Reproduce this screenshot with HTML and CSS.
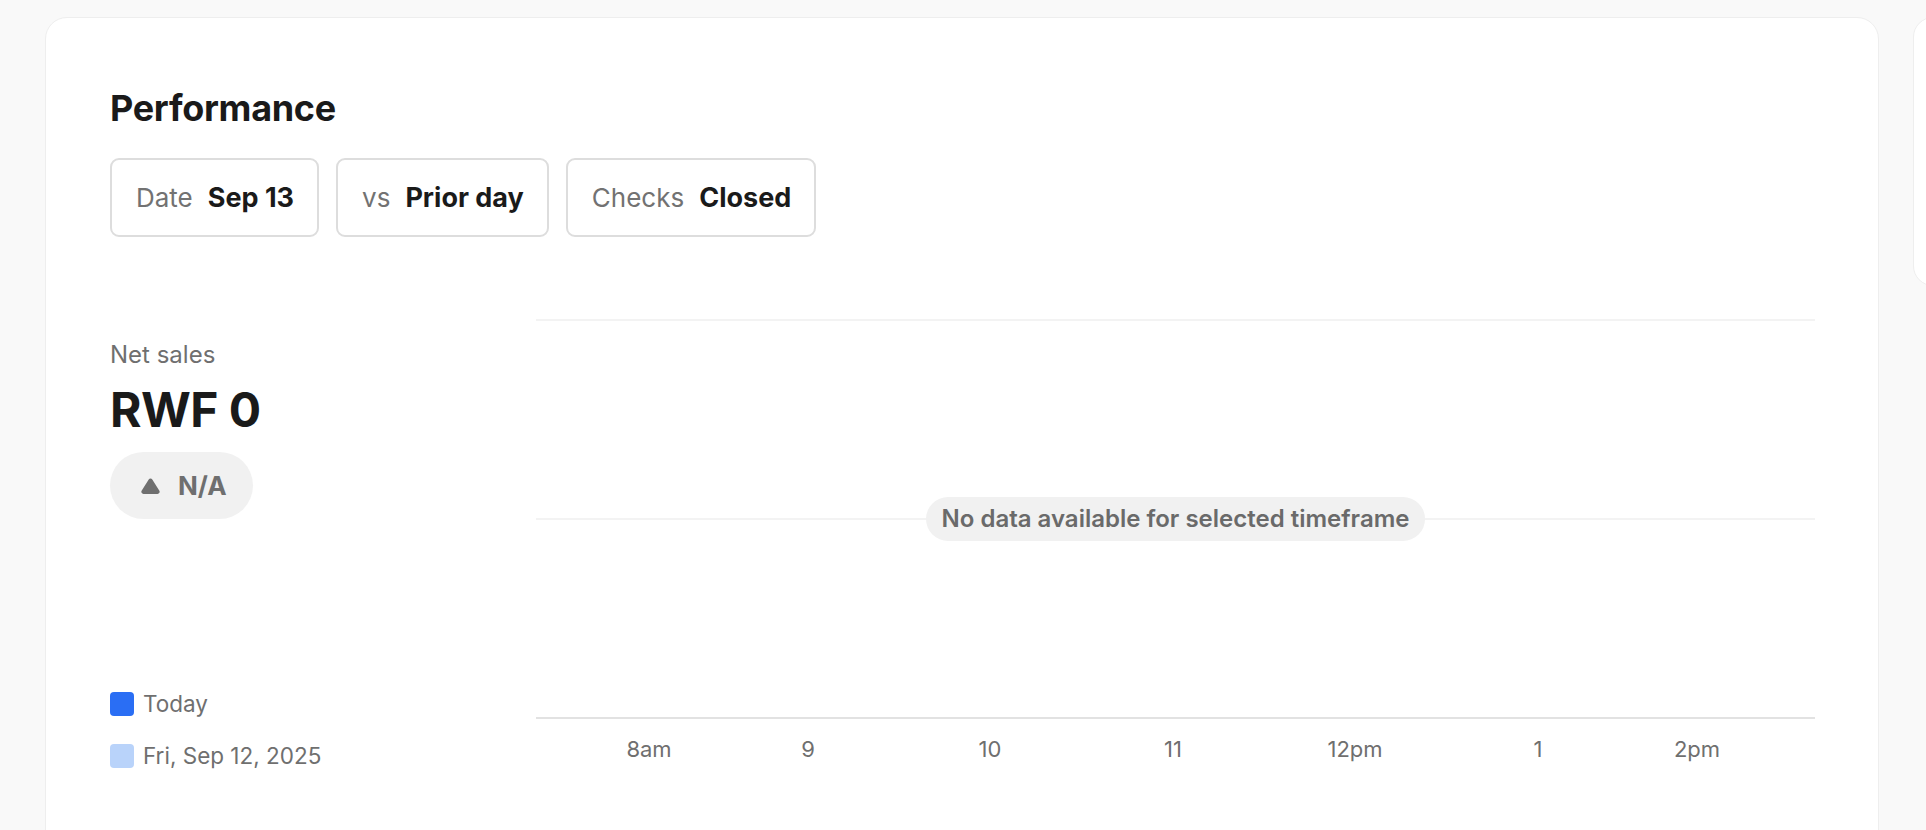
FILE: index.html
```html
<!DOCTYPE html>
<html lang="en">
<head>
<meta charset="utf-8">
<title>Performance</title>
<link rel="stylesheet" href="styles.css">
</head>
<body>
<div class="page">
  <section class="card">
    <h2 class="title">Performance</h2>
    <div class="filters">
      <button class="filter"><span class="f-label">Date</span><span class="f-value">Sep 13</span></button>
      <button class="filter"><span class="f-label">vs</span><span class="f-value">Prior day</span></button>
      <button class="filter"><span class="f-label">Checks</span><span class="f-value">Closed</span></button>
    </div>
    <div class="body">
      <div class="summary">
        <div class="metric">
          <div class="metric-label">Net sales</div>
          <div class="metric-value">RWF 0</div>
          <div class="delta">
            <svg class="delta-icon" width="21" height="17" viewBox="0 0 20 16"><path d="M8.3 2.2a2 2 0 0 1 3.4 0l6.6 10.6A2 2 0 0 1 16.6 16H3.4a2 2 0 0 1-1.7-3.2z" fill="#6f6f6f"/></svg>
            <span>N/A</span>
          </div>
        </div>
        <ul class="legend">
          <li class="legend-item"><span class="swatch swatch-today"></span>Today</li>
          <li class="legend-item"><span class="swatch swatch-prior"></span>Fri, Sep 12, 2025</li>
        </ul>
      </div>
      <div class="chart">
        <div class="plot">
          <div class="grid-line"></div>
          <div class="grid-line"></div>
          <div class="axis-line"></div>
          <div class="empty">No data available for selected timeframe</div>
        </div>
        <div class="ticks">
          <span class="tick" style="left:113px">8am</span>
          <span class="tick" style="left:272px">9</span>
          <span class="tick" style="left:454px">10</span>
          <span class="tick" style="left:637px">11</span>
          <span class="tick" style="left:819px">12pm</span>
          <span class="tick" style="left:1002px">1</span>
          <span class="tick" style="left:1161px">2pm</span>
        </div>
      </div>
    </div>
  </section>
  <aside class="side-card"></aside>
</div>
</body>
</html>
```

FILE: styles.css
```css
* { box-sizing: border-box; }
html, body {
  margin: 0;
  padding: 0;
  background: #f9f9f9;
  font-family: Inter, "Noto Sans", "Liberation Sans", sans-serif;
  color: #1a1a1a;
  overflow: hidden;
  height: 830px;
}
.page {
  display: flex;
  gap: 34px;
  padding: 17px 0 0 45px;
  align-items: flex-start;
}
.card {
  flex: 0 0 1834px;
  height: 900px;
  background: #fff;
  border: 1.5px solid #eeeeee;
  border-radius: 22px;
  padding: 68px 63px 0 64px;
}
.side-card {
  flex: 0 0 40px;
  height: 269px;
  background: #fff;
  border: 1.5px solid #eeeeee;
  border-radius: 22px;
}
.title {
  margin: 0;
  font-size: 36px;
  line-height: 44px;
  font-weight: 700;
  letter-spacing: -0.3px;
}
.filters {
  display: flex;
  gap: 17px;
  margin-top: 28px;
}
.filter {
  display: flex;
  align-items: center;
  height: 79px;
  padding: 0 23px 0 24px;
  background: #fff;
  border: 2px solid #dddddd;
  border-radius: 9px;
  font-family: inherit;
  font-size: 26px;
  cursor: pointer;
}
.f-label {
  color: #727272;
  font-weight: 400;
  margin-right: 15px;
}
.f-value {
  color: #1a1a1a;
  font-weight: 700;
  font-size: 27px;
}
.body {
  display: grid;
  grid-template-columns: 426px 1fr;
  margin-top: 82px;
}
.summary {
  display: flex;
  flex-direction: column;
  justify-content: space-between;
  height: 451px;
}
.metric { padding-top: 20px; }
.metric-label {
  font-size: 24px;
  line-height: 32px;
  color: #6f6f6f;
}
.metric-value {
  font-size: 48px;
  line-height: 56px;
  font-weight: 700;
  margin-top: 11px;
  letter-spacing: -0.5px;
}
.delta {
  display: inline-flex;
  align-items: center;
  gap: 17px;
  height: 67px;
  margin-top: 14px;
  padding: 0 26px 0 30px;
  background: #f1f1f1;
  border-radius: 34px;
  color: #6f6f6f;
  font-size: 26px;
  font-weight: 700;
}
.legend {
  list-style: none;
  margin: 0;
  padding: 0;
  display: flex;
  flex-direction: column;
  gap: 23px;
}
.legend-item {
  display: flex;
  align-items: center;
  gap: 9px;
  font-size: 22.5px;
  line-height: 29px;
  color: #6f6f6f;
}
.swatch {
  width: 24px;
  height: 24px;
  border-radius: 4px;
}
.swatch-today { background: #2a6ef4; }
.swatch-prior { background: #b9d3fa; }
.chart {
  display: flex;
  flex-direction: column;
}
.plot {
  position: relative;
  height: 400px;
  display: flex;
  flex-direction: column;
  justify-content: space-between;
}
.grid-line {
  height: 2px;
  background: #f3f3f3;
}
.axis-line {
  height: 2px;
  background: #e2e2e2;
}
.empty {
  position: absolute;
  left: 50%;
  top: 200px;
  transform: translate(-50%, -50%);
  background: #f1f1f1;
  border-radius: 22px;
  padding: 0 16px;
  height: 44px;
  line-height: 44px;
  font-size: 24px;
  font-weight: 600;
  color: #6a6a6a;
  white-space: nowrap;
}
.ticks {
  position: relative;
  height: 70px;
}
.tick {
  position: absolute;
  top: 16px;
  transform: translateX(-50%);
  font-size: 22px;
  line-height: 28px;
  color: #6f6f6f;
}
```
